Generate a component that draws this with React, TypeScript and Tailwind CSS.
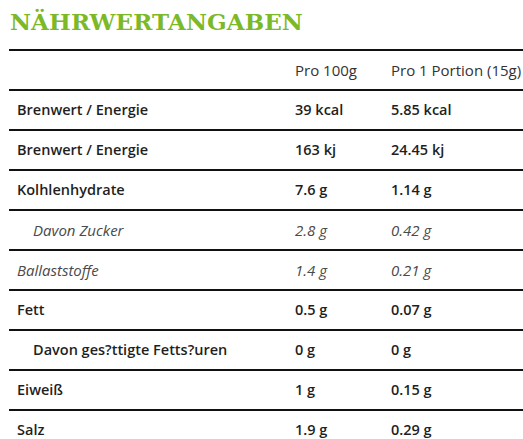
import React from "react";

type Row = { label: string; a: string; b: string; kind: "bold" | "italic" | "italicIndent" | "boldIndent" };

const rows: Row[] = [
  { label: "Brenwert / Energie", a: "39 kcal", b: "5.85 kcal", kind: "bold" },
  { label: "Brenwert / Energie", a: "163 kj", b: "24.45 kj", kind: "bold" },
  { label: "Kolhlenhydrate", a: "7.6 g", b: "1.14 g", kind: "bold" },
  { label: "Davon Zucker", a: "2.8 g", b: "0.42 g", kind: "italicIndent" },
  { label: "Ballaststoffe", a: "1.4 g", b: "0.21 g", kind: "italic" },
  { label: "Fett", a: "0.5 g", b: "0.07 g", kind: "bold" },
  { label: "Davon ges?ttigte Fetts?uren", a: "0 g", b: "0 g", kind: "boldIndent" },
  { label: "Eiweiß", a: "1 g", b: "0.15 g", kind: "bold" },
  { label: "Salz", a: "1.9 g", b: "0.29 g", kind: "bold" },
];

export default function App() {
  return (
    <div className="w-[523px] h-[439px] overflow-hidden bg-white" style={{ fontFamily: '"Open Sans", "Noto Sans", sans-serif' }}>
      <h1
        className="pl-[10px] pt-[8px] h-[49px] text-[23px] leading-[28px] font-bold text-[#7cb928] tracking-[0.1px]"
        style={{ fontFamily: '"DejaVu Serif", "Liberation Serif", serif' }}
      >
        NÄHRWERTANGABEN
      </h1>
      <div className="ml-[9px]">
        <div className="grid grid-cols-[278px_96px_1fr] h-[40px] items-center border-t-2 border-[#111] text-[15px] text-[#333]">
          <div />
          <div className="pl-2 whitespace-nowrap">Pro 100g</div>
          <div className="pl-2 whitespace-nowrap">Pro 1 Portion (15g)</div>
        </div>
        {rows.map((r, i) => {
          const italic = r.kind === "italic" || r.kind === "italicIndent";
          const indent = r.kind === "italicIndent" || r.kind === "boldIndent";
          const cls = italic ? "italic font-normal text-[15px] text-[#4a4a4a]" : "font-semibold text-[14.5px] text-[#1f1f1f]";
          return (
            <div
              key={i}
              className={`grid grid-cols-[278px_96px_1fr] h-[40px] items-center border-t-2 border-[#111] ${cls}`}
            >
              <div className={indent ? "pl-6 whitespace-nowrap" : "pl-2 whitespace-nowrap"}>{r.label}</div>
              <div className="pl-2 whitespace-nowrap">{r.a}</div>
              <div className="pl-2 whitespace-nowrap">{r.b}</div>
            </div>
          );
        })}
      </div>
    </div>
  );
}
